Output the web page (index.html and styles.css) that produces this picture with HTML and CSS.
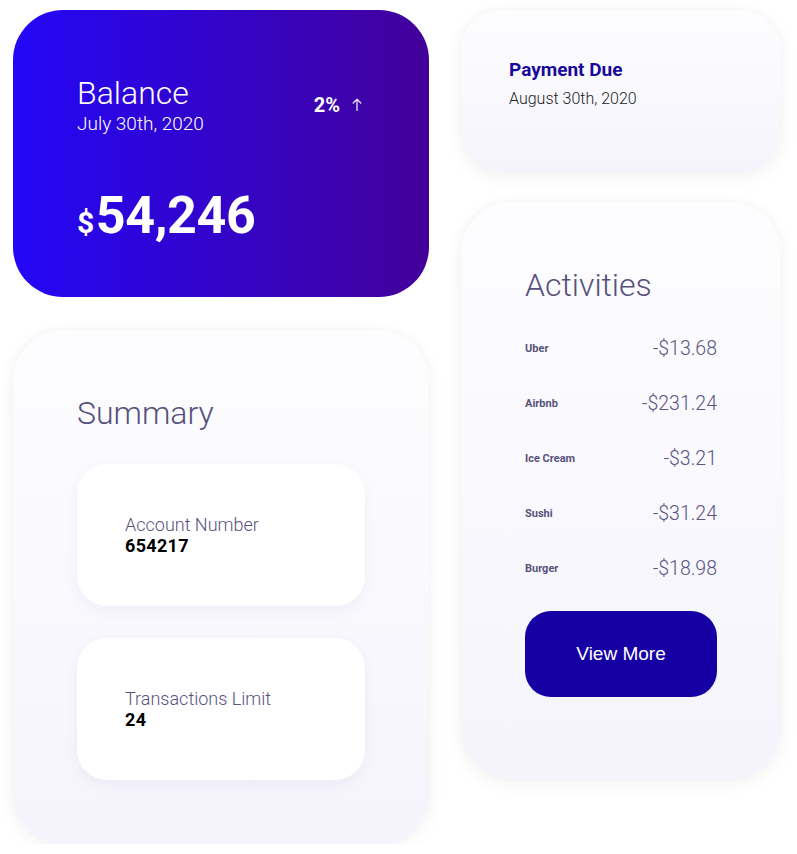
FILE: index.html
```html
<!DOCTYPE html>
<html lang="en">
<head>
<meta charset="utf-8">
<title>Dashboard</title>
<link rel="stylesheet" href="styles.css">
</head>
<body>
<div class="page">
  <div class="col col-left">
    <section class="card balance">
      <div class="balance-head">
        <div>
          <div class="balance-title">Balance</div>
          <div class="balance-date">July 30th, 2020</div>
        </div>
        <div class="trend">
          <span class="trend-val">2%</span>
          <svg class="trend-arrow" width="10" height="13" viewBox="0 0 10 13"><path d="M5 12.5V1.2M1.2 5L5 1.2L8.8 5" fill="none" stroke="currentColor" stroke-width="1.4" stroke-linecap="round" stroke-linejoin="round"/></svg>
        </div>
      </div>
      <div class="balance-amount"><span class="cur">$</span>54,246</div>
    </section>

    <section class="card light summary">
      <h2 class="card-title">Summary</h2>
      <div class="info-card">
        <div class="info-label">Account Number</div>
        <div class="info-value">654217</div>
      </div>
      <div class="info-card">
        <div class="info-label">Transactions Limit</div>
        <div class="info-value">24</div>
      </div>
    </section>
  </div>

  <div class="col col-right">
    <section class="card light payment">
      <div class="payment-title">Payment Due</div>
      <div class="payment-date">August 30th, 2020</div>
    </section>

    <section class="card light activities">
      <h2 class="card-title">Activities</h2>
      <ul class="act-list">
        <li class="act-row"><span class="act-name">Uber</span><span class="act-amt">-$13.68</span></li>
        <li class="act-row"><span class="act-name">Airbnb</span><span class="act-amt">-$231.24</span></li>
        <li class="act-row"><span class="act-name">Ice Cream</span><span class="act-amt">-$3.21</span></li>
        <li class="act-row"><span class="act-name">Sushi</span><span class="act-amt">-$31.24</span></li>
        <li class="act-row"><span class="act-name">Burger</span><span class="act-amt">-$18.98</span></li>
      </ul>
      <button class="view-more">View More</button>
    </section>
  </div>
</div>
</body>
</html>
```

FILE: styles.css
```css
* { box-sizing: border-box; }
html, body { margin: 0; padding: 0; background: #ffffff; }
body { font-family: Roboto, "Liberation Sans", sans-serif; }

.page {
  display: flex;
  align-items: flex-start;
  gap: 32px;
  padding: 10px 0 0 13px;
}

.col { display: flex; flex-direction: column; }
.col-left { width: 416px; gap: 33px; }
.col-right { width: 320px; gap: 30px; }

.card { border-radius: 50px; }
.light {
  background: linear-gradient(180deg, #fdfdff 0%, #f5f4fc 100%);
  box-shadow: 0 4px 18px rgba(60, 50, 40, 0.06), 0 0 6px rgba(60, 50, 40, 0.03);
}

/* Balance */
.balance {
  height: 287px;
  padding: 64px 67px 52px 64px;
  color: #fff;
  background: linear-gradient(90deg, #2407f7 0%, #43019a 100%);
  border-radius: 50px;
  display: flex;
  flex-direction: column;
}
.balance-head {
  display: flex;
  justify-content: space-between;
  align-items: center;
}
.balance-title { font-size: 32px; font-weight: 300; }
.balance-date { font-size: 19px; font-weight: 300; line-height: 23px; }
.trend { display: flex; align-items: center; gap: 12px; }
.trend-val { font-size: 20px; font-weight: 700; }
.trend-arrow { color: rgba(255,255,255,0.85); display: block; }
.balance-amount {
  margin-top: 50px;
  font-size: 52px;
  font-weight: 700;
  letter-spacing: -0.4px;
}
.balance-amount .cur { font-size: 30px; margin-right: 2px; }

/* Summary */
.summary {
  padding: 64px;
  display: flex;
  flex-direction: column;
  gap: 32px;
}
.card-title {
  margin: 0;
  font-size: 32px;
  font-weight: 300;
  color: #56517c;
}
.info-card {
  height: 142px;
  background: #ffffff;
  border-radius: 30px;
  padding: 0 48px;
  display: flex;
  flex-direction: column;
  justify-content: center;
  box-shadow: 0 4px 14px rgba(70, 60, 140, 0.06);
}
.info-label { font-size: 18px; font-weight: 300; color: #57527e; line-height: 21px; }
.info-value { font-size: 18px; font-weight: 700; color: #000; line-height: 21px; letter-spacing: 0.3px; }

/* Payment */
.payment {
  height: 162px;
  border-radius: 40px;
  padding: 48px 48px 0;
}
.payment-title { font-size: 19px; font-weight: 700; color: #1a0a9c; }
.payment-date { margin-top: 8px; font-size: 16px; font-weight: 300; color: #222; }

/* Activities */
.activities {
  height: 577px;
  padding: 64px 64px 0 64px;
  display: flex;
  flex-direction: column;
}
.act-list { list-style: none; margin: 17px 0 0; padding: 0; }
.act-row {
  height: 55px;
  display: flex;
  justify-content: space-between;
  align-items: center;
}
.act-name { font-size: 11px; font-weight: 700; color: #57527a; }
.act-amt { font-size: 19.5px; font-weight: 300; color: #5a5583; }
.view-more {
  margin-top: 15px;
  width: 192px;
  height: 86px;
  border: 0;
  border-radius: 26px;
  background: #1600a4;
  color: #ffffff;
  font-family: "Liberation Sans", Arial, sans-serif;
  font-size: 19px;
  cursor: pointer;
}
```
